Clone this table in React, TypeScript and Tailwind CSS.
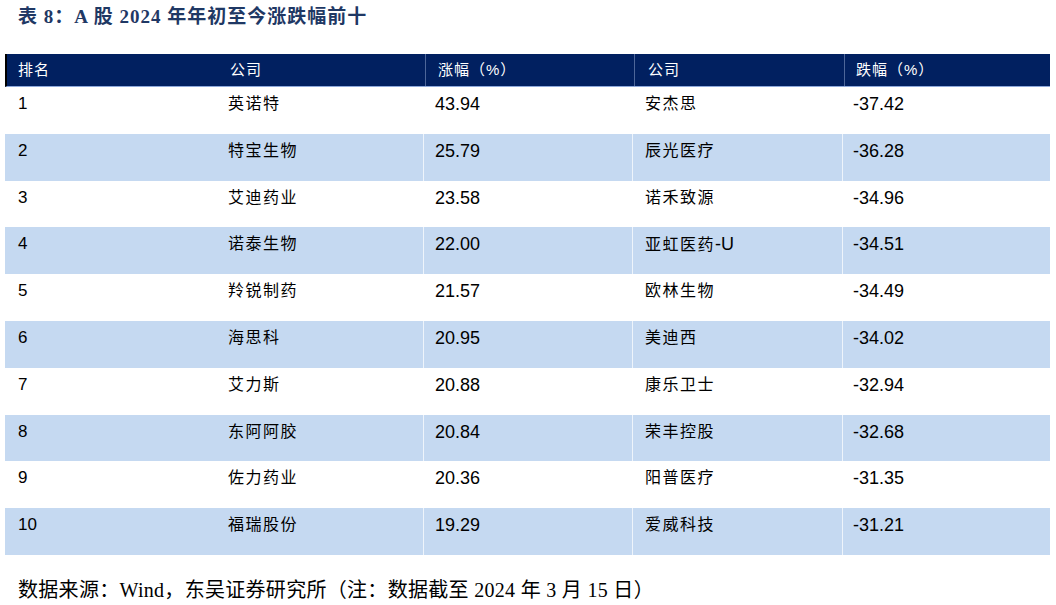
const rows = [
  ["1", "英诺特", "43.94", "安杰思", "-37.42"],
  ["2", "特宝生物", "25.79", "辰光医疗", "-36.28"],
  ["3", "艾迪药业", "23.58", "诺禾致源", "-34.96"],
  ["4", "诺泰生物", "22.00", "亚虹医药-U", "-34.51"],
  ["5", "羚锐制药", "21.57", "欧林生物", "-34.49"],
  ["6", "海思科", "20.95", "美迪西", "-34.02"],
  ["7", "艾力斯", "20.88", "康乐卫士", "-32.94"],
  ["8", "东阿阿胶", "20.84", "荣丰控股", "-32.68"],
  ["9", "佐力药业", "20.36", "阳普医疗", "-31.35"],
  ["10", "福瑞股份", "19.29", "爱威科技", "-31.21"],
];

const cols = "grid grid-cols-[211px_207px_209px_210px_208px]";
const cn = "tracking-[1.5px] text-[16px]";

const App = () => {
  return (
    <div
      className="w-[1056px] h-[605px] bg-white overflow-hidden"
      style={{ fontFamily: '"Liberation Sans", "Noto Sans CJK SC", sans-serif' }}
    >
      <h1
        className="pl-[18px] pt-[5px] h-[54px] text-[19px] tracking-[1px] font-bold text-[#1f3864] leading-[24px]"
        style={{ fontFamily: '"Liberation Serif", "Noto Sans CJK SC", serif' }}
      >
        表 8：A 股 2024 年年初至今涨跌幅前十
      </h1>

      <div className="ml-[5px] w-[1045px]">
        <div className={`${cols} h-[33px] bg-[#012060] text-white text-[15px] border-l-2 border-black border-b border-b-[#8ea9db] items-center`}>
          <div className="pl-[11px] tracking-[1px]">排名</div>
          <div className="pl-[12px] tracking-[1px]">公司</div>
          <div className="pl-[12px] tracking-[1px] border-l border-[#4d6699] h-full flex items-center">涨幅（%）</div>
          <div className="pl-[13px] tracking-[1px] border-l border-[#4d6699] h-full flex items-center">公司</div>
          <div className="pl-[11px] tracking-[1px] border-l border-[#4d6699] h-full flex items-center">跌幅（%）</div>
        </div>

        {rows.map((r, i) => (
          <div
            key={r[0]}
            className={`${cols} h-[46.8px] text-black ${i % 2 === 1 ? "bg-[#c5d9f1]" : "bg-white"}`}
          >
            <div className="pl-[13px] pt-[7px] leading-[20px] text-[17px]">{r[0]}</div>
            <div className={`pl-[12px] pt-[7px] leading-[20px] ${cn}`}>{r[1]}</div>
            <div className="pl-[11px] pt-[7px] leading-[20px] text-[18px] border-l border-white/70">{r[2]}</div>
            <div className={`pl-[12px] pt-[7px] leading-[20px] ${cn} border-l border-white/70`}>
              {r[3].endsWith("-U") ? (
                <>
                  {r[3].slice(0, -2)}
                  <span className="text-[18px] tracking-normal">-U</span>
                </>
              ) : (
                r[3]
              )}
            </div>
            <div className="pl-[10px] pt-[7px] leading-[20px] text-[18px] border-l border-white/70">{r[4]}</div>
          </div>
        ))}
      </div>

      <p
        className="pl-[18px] pt-[22px] text-[20px] tracking-[0.3px] leading-[26px] text-black"
        style={{ fontFamily: '"Liberation Serif", "Noto Sans CJK SC", serif' }}
      >
        数据来源：Wind，东吴证券研究所（注：数据截至 2024 年 3 月 15 日）
      </p>
    </div>
  );
};

export default App;
